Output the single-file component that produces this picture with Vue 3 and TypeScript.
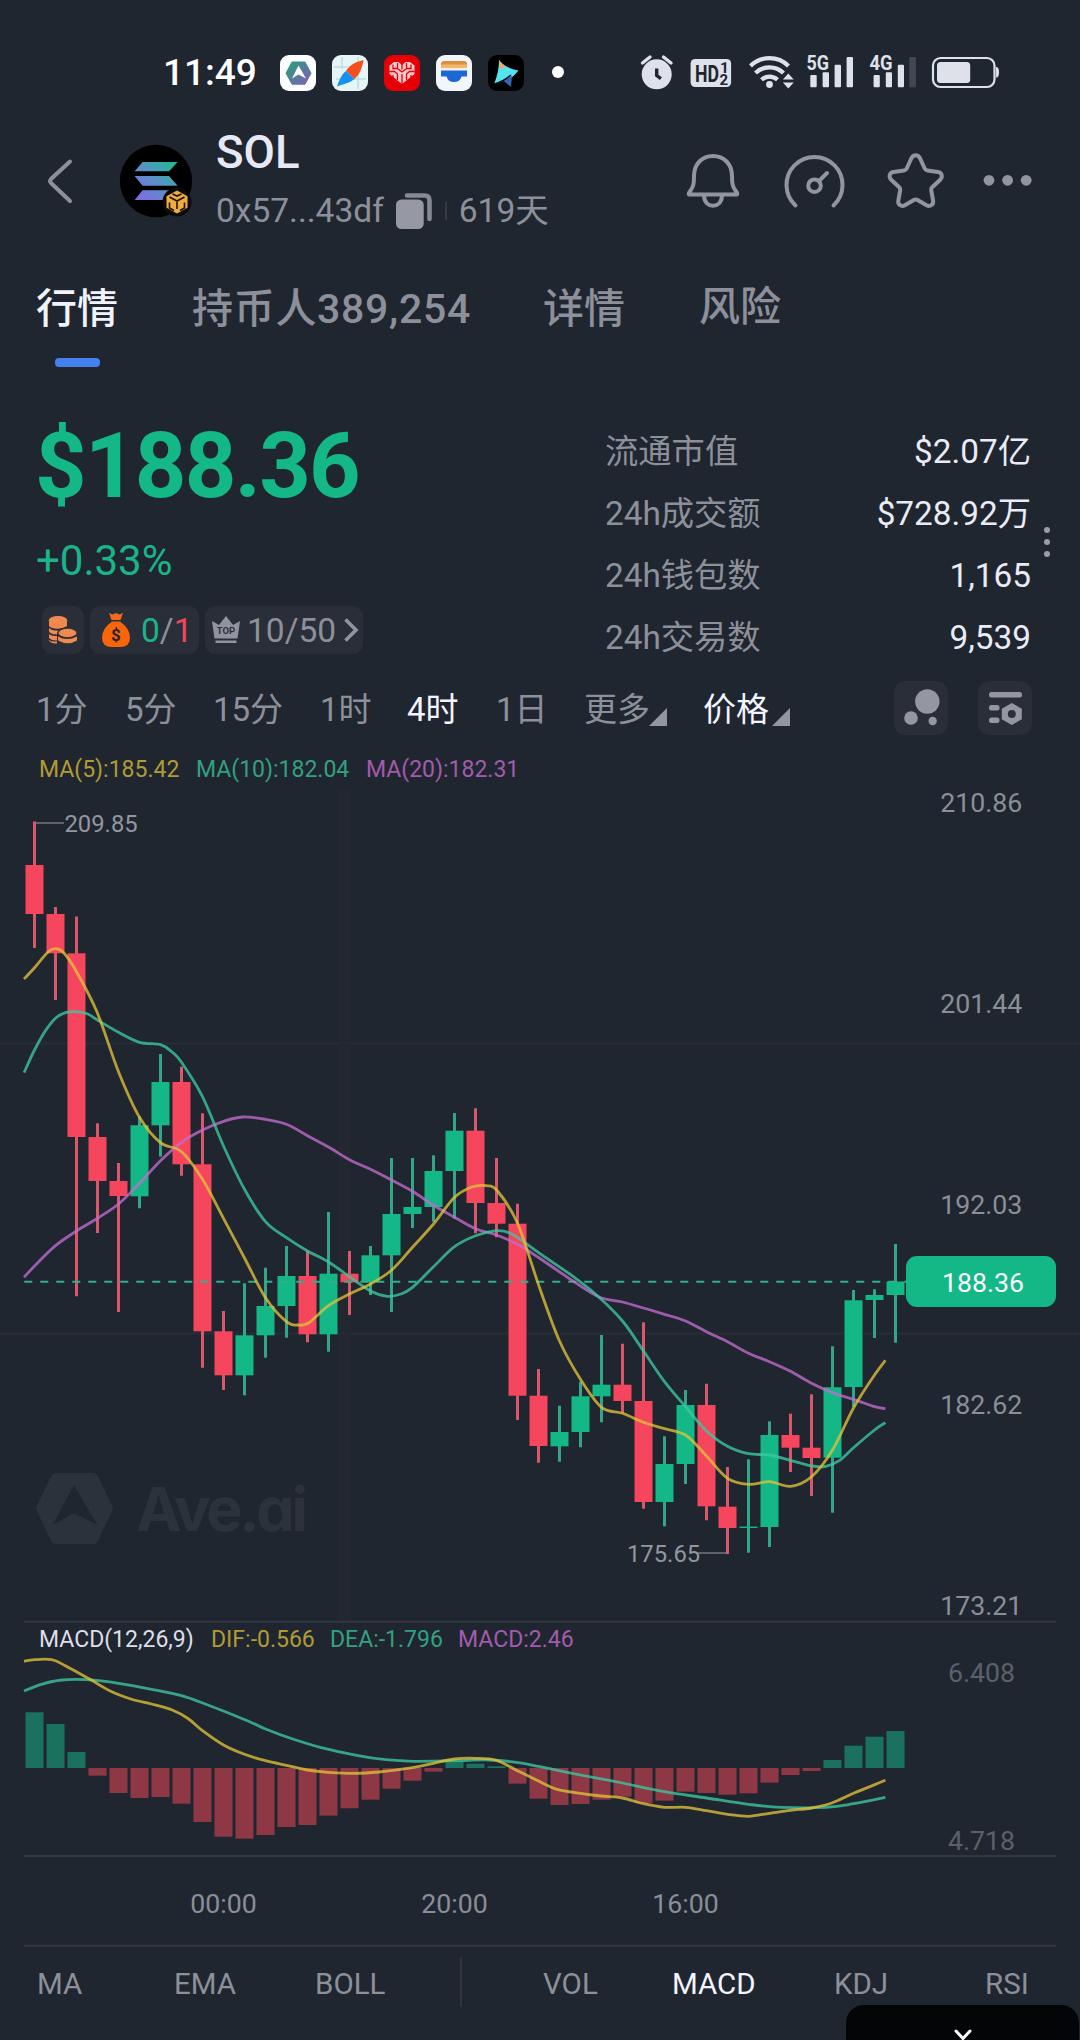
<script setup lang="ts">
type Candle = [open: 'u' | 'd', high: number, top: number, bottom: number, low: number]
type Point = [x: number, y: number]

const FIRST_X = 34.5
const STEP = 21
const BODY = 18
const ZERO_Y = 1768

const candles: Candle[] = [
  ['d', 821.5, 865, 914, 948], ['d', 907, 914, 953.3, 1000], ['d', 916.5, 953.3, 1137, 1296.3],
  ['d', 1123.3, 1137, 1181, 1233], ['d', 1163, 1181, 1196, 1312], ['u', 1116.7, 1125.3, 1196.3, 1208.3],
  ['u', 1054, 1082, 1125.3, 1156.7], ['d', 1066.7, 1082, 1164.3, 1175.7], ['d', 1113.3, 1164.3, 1331.3, 1367.7],
  ['d', 1311, 1331.3, 1375.3, 1390], ['u', 1283.3, 1335.3, 1375.3, 1395.3], ['u', 1267.7, 1306, 1335.3, 1357.7],
  ['u', 1246, 1276, 1306, 1337.7], ['d', 1250.7, 1276, 1334.3, 1342.3], ['u', 1212, 1273.7, 1334.3, 1351.7],
  ['d', 1251, 1273.7, 1282.3, 1315], ['u', 1246, 1255.3, 1282.3, 1295], ['u', 1158, 1214, 1255.3, 1312],
  ['u', 1158, 1207, 1214, 1228], ['u', 1155.3, 1171, 1207, 1221.7], ['u', 1113, 1130.7, 1171, 1218.7],
  ['d', 1108.3, 1130.7, 1203, 1233.3], ['d', 1158, 1203, 1223.7, 1237.3], ['d', 1203.7, 1223.7, 1395.7, 1420],
  ['d', 1369, 1395.7, 1446, 1462.7], ['u', 1405.7, 1432, 1446.3, 1461.7], ['u', 1381.7, 1396.3, 1432, 1447.3],
  ['u', 1335, 1384.7, 1396.3, 1422.3], ['d', 1343.7, 1384.7, 1401, 1413.3], ['d', 1322.3, 1401, 1502, 1508.7],
  ['u', 1436.3, 1464, 1502, 1526.3], ['u', 1390, 1405, 1464, 1484], ['d', 1383.7, 1405, 1506.3, 1520.3],
  ['d', 1467, 1506.7, 1528, 1554], ['u', 1459.3, 1526.6, 1528, 1552.7], ['u', 1421.3, 1435, 1527, 1547],
  ['d', 1413.7, 1435, 1447.7, 1472], ['d', 1394.3, 1447.7, 1458, 1496], ['u', 1346.3, 1387.3, 1457.7, 1512.7],
  ['u', 1290, 1300.3, 1387, 1406.7], ['u', 1289.3, 1295, 1300, 1338], ['u', 1244, 1281.5, 1295, 1342.7],
]

const histogram: number[] = [
  55.7, 44, 16, -7.7, -25, -30, -29, -35.7, -54, -68.7, -70.7, -67, -59, -57, -47.7, -40.3, -31.7, -20.7,
  -12.7, -3.7, 7, 4.3, 1.7, -15.7, -30.7, -37, -36, -31.7, -28.7, -35, -32.7, -23.7, -25, -26.7, -25.3,
  -14.7, -7, -3, 8, 22.3, 31.3, 37,
]

const ma5: Point[] = [
  [24, 979], [34.5, 967.7], [48, 952], [55.5, 948.7], [63.7, 952.7], [76.5, 971.7], [97, 1012], [118.5, 1071.7],
  [139.5, 1117.3], [160.5, 1142.7], [181.5, 1151.7], [202.5, 1179.3], [223.5, 1218.3], [244.5, 1258],
  [265.5, 1297.7], [286.5, 1321.7], [298, 1325], [308.5, 1323], [328.5, 1305.7], [349.5, 1294], [370.5, 1284],
  [391.5, 1270.3], [412.5, 1247.3], [433.5, 1224], [454.5, 1197.3], [472, 1187], [486, 1185.7], [497.5, 1191],
  [517.5, 1223.3], [540, 1289], [559.5, 1341], [580.5, 1379.3], [601.5, 1407.3], [622.5, 1413.3],
  [643.5, 1422.3], [664.5, 1428.7], [685.5, 1435], [706.5, 1456], [727.5, 1478.3], [748.5, 1484.3],
  [769.5, 1481.7], [790.5, 1486.3], [811.5, 1476.7], [832.5, 1450], [853.5, 1408], [874.5, 1375], [885.4, 1360.3],
]
const ma10: Point[] = [
  [24, 1072.7], [34.5, 1050], [44.8, 1031.7], [55.5, 1018.3], [65.4, 1012.7], [76.5, 1011.7], [87.8, 1014],
  [97.5, 1020], [118.5, 1032.3], [139.5, 1042.3], [160.5, 1044.7], [172, 1052], [181.5, 1062.3], [202.5, 1096.7],
  [223.5, 1146], [244.5, 1189.3], [265.5, 1221.7], [286.5, 1237.7], [307.5, 1251], [328.5, 1262], [349.5, 1276.7],
  [370.5, 1291], [387.4, 1296.3], [401, 1294], [412.5, 1287.3], [433.5, 1266.7], [454.5, 1246.7], [475.5, 1235.7],
  [496.5, 1230.7], [509.7, 1233], [523.5, 1241.7], [540, 1253.7], [574.4, 1277.3], [598.5, 1296.7], [622.5, 1321],
  [643.5, 1351], [664.5, 1381.7], [685.5, 1406.7], [706.5, 1431], [727.5, 1446.3], [748.5, 1453.7], [769.5, 1455],
  [790.5, 1460.3], [812, 1466], [825.8, 1466.3], [839.6, 1460.3], [853.5, 1447.7], [874.5, 1430], [885.4, 1422.7],
]
const ma20: Point[] = [
  [24, 1277.3], [34.5, 1266], [55.5, 1245.7], [76.5, 1231], [97.5, 1218.3], [118.5, 1204], [139.5, 1183.3],
  [160.5, 1160.7], [181.5, 1142.3], [202.5, 1130], [223.5, 1121.3], [242.8, 1117], [265.5, 1119.3],
  [286.5, 1124.3], [307.5, 1135.7], [328.5, 1147], [349.5, 1159.7], [370.5, 1169.3], [391.5, 1180],
  [412.5, 1191.3], [433.5, 1205.3], [454.5, 1217.3], [475.5, 1228.7], [496.5, 1235], [517.5, 1244.3],
  [540, 1258.5], [567.5, 1277.3], [598.5, 1296.7], [622.5, 1302], [643.5, 1308], [664.5, 1314.3], [685.5, 1321],
  [706.5, 1331.7], [727.5, 1341.7], [748.5, 1353.3], [769.5, 1361.7], [790.5, 1371.3], [811.5, 1383.3],
  [832.5, 1392.7], [853.5, 1399.3], [874.5, 1406.7], [885.4, 1408.7],
]
const dif: Point[] = [
  [24, 1661.3], [34.5, 1659.7], [51.7, 1659.7], [65.4, 1665.7], [90, 1679.3], [110.2, 1691], [130.9, 1699],
  [151.5, 1704], [172.2, 1710], [188, 1718.5], [202.5, 1730.7], [223.5, 1745], [244.5, 1754.3], [265.5, 1760.7],
  [286.5, 1765.3], [307.5, 1770], [328.5, 1772.3], [354.7, 1773.3], [378.8, 1772], [412.5, 1767.7],
  [433.5, 1763.3], [454.5, 1759], [475.5, 1758.3], [496.5, 1760.3], [517.5, 1770.7], [540, 1781.7],
  [557, 1789.3], [580.5, 1793.3], [601.3, 1796], [622.5, 1798], [643.5, 1803.7], [664.5, 1807.3],
  [685.5, 1807.3], [706.5, 1810.7], [727.5, 1814.3], [748.5, 1816.3], [769.5, 1813.3], [790.5, 1810.3],
  [811.5, 1808], [832.5, 1802.7], [853.5, 1793.3], [885.4, 1780.3],
]
const dea: Point[] = [
  [24, 1691], [41.3, 1684.3], [62, 1680], [86, 1679.7], [118.5, 1683.3], [151.5, 1689.3], [181.5, 1695.7],
  [206.6, 1704.5], [248, 1721], [265.5, 1729], [292.7, 1739], [320.3, 1747.3], [358, 1755.7], [385.7, 1759.7],
  [413, 1761.3], [454.5, 1760.7], [489, 1760], [516.6, 1762.3], [540, 1766.7], [580.5, 1775], [622.5, 1783],
  [664.5, 1791.7], [706.5, 1798], [748.5, 1804.3], [781, 1807.3], [826, 1807.3], [853.5, 1803.7], [885.4, 1797.3],
]

function smooth(pts: Point[]): string {
  let d = `M${pts[0][0]} ${pts[0][1]}`
  for (let i = 0; i < pts.length - 1; i++) {
    const p0 = pts[Math.max(i - 1, 0)]
    const p1 = pts[i]
    const p2 = pts[i + 1]
    const p3 = pts[Math.min(i + 2, pts.length - 1)]
    const c1 = [p1[0] + (p2[0] - p0[0]) / 6, p1[1] + (p2[1] - p0[1]) / 6]
    const c2 = [p2[0] - (p3[0] - p1[0]) / 6, p2[1] - (p3[1] - p1[1]) / 6]
    d += `C${c1[0].toFixed(1)} ${c1[1].toFixed(1)} ${c2[0].toFixed(1)} ${c2[1].toFixed(1)} ${p2[0]} ${p2[1]}`
  }
  return d
}

const cx = (i: number): number => FIRST_X + i * STEP

const priceAxis = [
  { y: 812, label: '210.86' },
  { y: 1012.8, label: '201.44' },
  { y: 1213.6, label: '192.03' },
  { y: 1414.4, label: '182.62' },
  { y: 1615.2, label: '173.21' },
]
const timeAxis = [
  { x: 223.5, label: '00:00' },
  { x: 454.5, label: '20:00' },
  { x: 685.5, label: '16:00' },
]
const stats = [
  { label: '流通市值', value: '$2.07亿' },
  { label: '24h成交额', value: '$728.92万' },
  { label: '24h钱包数', value: '1,165' },
  { label: '24h交易数', value: '9,539' },
]
const frames = ['1分', '5分', '15分', '1时', '4时', '1日']
const indicators = ['MA', 'EMA', 'BOLL', '', 'VOL', 'MACD', 'KDJ', 'RSI']
</script>

<template>
  <div class="screen">
    <div class="status">
      <span class="clock">11:49</span>
      <div class="apps">
        <svg width="36" height="36" viewBox="0 0 36 36">
          <defs>
            <linearGradient id="hexG" x1="0" y1="0" x2="1" y2="1">
              <stop offset="0.2" stop-color="#359583" /><stop offset="0.85" stop-color="#7667b4" />
            </linearGradient>
          </defs>
          <rect width="36" height="36" rx="9" fill="#fdfeff" />
          <path d="M12 7h13l6 11.200-6 11H12L6 18.200z" fill="url(#hexG)" stroke="url(#hexG)" stroke-width="1" stroke-linejoin="round" />
          <path d="M18.500 10.500l7.500 13-7.500-4-6.500 4z" fill="#fff" />
        </svg>
        <svg width="36" height="36" viewBox="0 0 36 36">
          <rect width="36" height="36" rx="9" fill="#e6f5f5" />
          <path d="M4 24h30M26 2v32M10 2v12M2 12h14" stroke="#b9dfe3" stroke-width="1.500" />
          <path d="M31.500 5C22 7 16 12 14 16l8.500 8C28 19 30 13 31.500 5z" fill="#f4501e" />
          <path d="M14 16l8.500 8C18 28 12 29 5 31.500 7 26 9 20 14 16z" fill="#1491f2" />
        </svg>
        <svg width="36" height="36" viewBox="0 0 36 36">
          <rect width="36" height="36" rx="9" fill="#e60005" />
          <path d="M18 29L5.500 19v-8.500l4.500-3.500h4.500L18 10l3.500-3H26l4.500 3.500V19z" fill="#ffc9cb" />
          <path d="M18 9v5.500m0 4.500v10M9 9.500v4h4.500V8m13.500 1.500v4h-4.500V8M5.500 16.500h5l3 2.500v6m17-8.500h-5l-3 2.500v6M14 14l4 3 4-3M9 20v3m18-3v3" stroke="#e60005" stroke-width="1.300" fill="none" />
        </svg>
        <svg width="36" height="36" viewBox="0 0 36 36">
          <rect width="36" height="36" rx="9" fill="#f3f5fc" />
          <path d="M5 9q0-3 3-3h20q3 0 3 3v1H5z" fill="#dd913e" />
          <path d="M5 9.500h26v3.500H5z" fill="#f2b76d" />
          <path d="M5 13h26v2.500H5z" fill="#f7f1df" />
          <path d="M5 15.500h26v6h-5.500q-1.500 5.500-7.500 5.500t-7.500-5.500H5z" fill="#1d68d4" />
        </svg>
        <svg width="36" height="36" viewBox="0 0 36 36">
          <rect width="36" height="36" rx="9" fill="#000" />
          <path d="M11 5q6 8 19.500 10.500Q26 21 22 24L6 29q5-12 5-24z" fill="#54e3ef" />
          <path d="M11 5q3.500 5 7 7l-6 2z" fill="#f5a564" />
          <path d="M15 25.500l9-4.500-1 11z" fill="#3663b4" />
          <path d="M6 29q9-2 17-9" stroke="#061018" stroke-width="1.500" fill="none" />
        </svg>
      </div>
      <i class="notif"></i>
      <svg class="sys" width="362" height="40" viewBox="640 52 362 40">
        <g fill="#dfe1ea">
          <circle cx="656.700" cy="74.300" r="15" />
          <path d="M642.500 63l7.500-6M671 63l-7.500-6" stroke="#dfe1ea" stroke-width="3.400" stroke-linecap="round" />
          <path d="M656.700 68.500v7l4.200 3.200" fill="none" stroke="#20262f" stroke-width="3.400" />
          <rect x="690.600" y="59" width="40.500" height="28" rx="4.500" />
          <text x="695" y="81.500" font-size="24" font-weight="700" textLength="24" lengthAdjust="spacingAndGlyphs" fill="#20262f">HD</text>
          <text x="720" y="72.500" font-size="15.500" font-weight="700" fill="#20262f">1</text>
          <text x="719.500" y="84.500" font-size="15" font-weight="700" fill="#20262f">2</text>
          <g fill="none" stroke="#dfe1ea" stroke-width="4.200">
            <path d="M750.500 66a27 27 0 0 1 38 0" />
            <path d="M755.500 73a20 20 0 0 1 28 0" />
            <path d="M761.500 79.700a12 12 0 0 1 16 0" />
          </g>
          <circle cx="769.500" cy="84.500" r="3.400" />
          <path d="M788.300 73.500l5.400 6h-10.800zM788.300 88.500l5.400-6h-10.800z" />
          <text x="806.500" y="70" font-size="20" font-weight="700" textLength="22.500" lengthAdjust="spacingAndGlyphs">5G</text>
          <rect x="810.300" y="75" width="6.400" height="12.300" rx="1" /><rect x="822.600" y="72.300" width="6.400" height="15" rx="1" />
          <rect x="834.600" y="64.700" width="6.400" height="22.600" rx="1" /><rect x="846.600" y="57" width="6.400" height="30.300" rx="1" />
          <text x="869.500" y="70" font-size="20" font-weight="700" textLength="23" lengthAdjust="spacingAndGlyphs">4G</text>
          <rect x="873.600" y="75" width="6.200" height="12.300" rx="1" /><rect x="885.800" y="72.300" width="6.200" height="15" rx="1" />
          <rect x="897.800" y="64.700" width="6.200" height="22.600" rx="1" /><rect x="909.300" y="57" width="6.600" height="30.300" rx="1" fill="#434753" />
          <rect x="933" y="58" width="61.500" height="29" rx="7.500" fill="none" stroke="#dfe1ea" stroke-width="2.200" />
          <rect x="937" y="62" width="33.200" height="21" rx="3.500" />
          <path d="M996 67h1q2 1 2 5.300t-2 5.300h-1z" />
        </g>
      </svg>
    </div>

    <header class="head">
      <svg class="back" width="28" height="48" viewBox="46 157 28 48">
        <path d="M70 161.500L51 179q-1.800 2 0 4l19 18" fill="none" stroke="#8d909b" stroke-width="4" stroke-linecap="round" />
      </svg>
      <svg class="logo" width="74" height="74" viewBox="119 144 74 74">
        <defs>
          <linearGradient id="solG" gradientUnits="userSpaceOnUse" x1="138" y1="202" x2="174" y2="160">
            <stop offset="0" stop-color="#8567e6" /><stop offset="0.500" stop-color="#5a90c8" /><stop offset="1" stop-color="#1bc08b" />
          </linearGradient>
        </defs>
        <circle cx="156" cy="181" r="36.200" fill="#000" />
        <path d="M142.600 162h35l-8.500 9.300h-34.500zM134.600 176h34.500l8.500 9.700h-35zM142.600 190.300h35l-8.500 9.700h-34.500z" fill="url(#solG)" />
        <circle cx="177" cy="202" r="14.500" fill="#0b0a0d" />
        <path d="M177 190.500l10.500 5.700v11.600L177 213.500l-10.500-5.700v-11.600z" fill="#f0ad3e" />
        <path d="M169.500 197l7.500 4 7.500-4M177 201v8M169.500 202.500v5.500l4.500 2.500M184.500 202.500v5.500l-4.500 2.500M172.500 194l4.500 2 4.500-2" fill="none" stroke="#1b1205" stroke-width="1.600" />
      </svg>
      <div class="title">
        <div class="name">SOL</div>
        <div class="addr">
          <span>0x57...43df</span>
          <svg class="copy" width="37" height="38" viewBox="395 192 37 38">
            <path d="M407 195.500h17.500q5 0 5 5V219" fill="none" stroke="#858993" stroke-width="4.600" stroke-linecap="round" />
            <rect x="396" y="199.500" width="27.700" height="29.500" rx="5.500" fill="#9699a3" />
          </svg>
          <i class="bar"></i>
          <span>619天</span>
        </div>
      </div>
      <svg class="tools" width="350" height="62" viewBox="684 150 350 62" fill="none" stroke="#9295a0" stroke-width="4" stroke-linecap="round" stroke-linejoin="round">
        <path d="M689 194.500c-1-1.500.5-2.500 1.600-4 3-4.500 3.400-7 3.400-14.500 0-12 8-20 19-20s19 8 19 20c0 7.500.4 10 3.400 14.500 1.100 1.500 2.600 2.500 1.600 4z" />
        <path d="M704 196c.5 6.500 4.500 9.800 9 9.800s8.500-3.300 9-9.800" />
        <path d="M795.500 205.500a28 28 0 1 1 38 0" />
        <circle cx="814.500" cy="185.700" r="6.300" />
        <path d="M819.500 180.500l7.500-7.500" />
        <path d="M911.500 158c1.800-3.600 6.600-3.600 8.400 0l4.800 10.500q.8 1.700 2.700 2l10.600 1.500c4 .6 5 5 2.200 7.700l-8 7.500q-1.300 1.300-1 3l1.900 10.500c.6 4-3 6.400-6.600 4.600l-8.900-5.200q-1.900-1-3.800 0l-8.900 5.200c-3.600 1.800-7.200-.6-6.600-4.600l1.900-10.500q.3-1.700-1-3l-8-7.500c-2.800-2.700-1.800-7.100 2.200-7.700l10.600-1.500q1.900-.3 2.700-2z" />
        <g fill="#9295a0" stroke="none">
          <circle cx="989" cy="180.300" r="5.400" /><circle cx="1007.600" cy="180.300" r="5.400" /><circle cx="1026.200" cy="180.300" r="5.400" />
        </g>
      </svg>
    </header>

    <nav class="tabs">
      <div class="tab on">行情<i></i></div>
      <div class="tab wide">持币人389,254</div>
      <div class="tab">详情</div>
      <div class="tab up">风险</div>
    </nav>

    <section class="summary">
      <div class="quote">
        <div class="price">$188.36</div>
        <div class="chg">+0.33%</div>
        <div class="chips">
          <div class="chip c1">
            <svg width="30" height="30" viewBox="0 0 30 30">
              <g fill="#f0884f">
                <path d="M1 7v4q4 4 14 2l4-2V7zM1 13v4q3 2.500 8 2.500l2-4Q4 16 1 13zM1 19v4q3 3 8 2.500V21Q3 21 1 19zM1 25v1q3 3 8 2.500v-2Q3 27 1 25z" />
                <ellipse cx="10" cy="5.500" rx="9.300" ry="4.500" />
                <ellipse cx="19.500" cy="18" rx="9.700" ry="5" stroke="#2b2f39" stroke-width="1.500" />
                <path d="M10 21.500q9 5 19 0v4q-9 5.500-19 0z" />
              </g>
            </svg>
          </div>
          <div class="chip c2">
            <svg width="30" height="36" viewBox="0 0 30 36">
              <path d="M8 1l3.500 1.500L15 1l3.500 1.500L22 1l-2.500 7h-9z" fill="#f26a1b" />
              <path d="M11 9.500h8q10 7 10 16 0 9.500-10 9.500h-8Q1 35 1 25.500q0-9 10-16z" fill="#f9650a" />
              <text x="15" y="29" text-anchor="middle" font-size="17" font-weight="700" fill="#2b2320">$</text>
            </svg>
            <span><b class="g">0</b>/<b class="r">1</b></span>
          </div>
          <div class="chip c3">
            <svg width="28" height="28" viewBox="0 0 28 28">
              <path d="M0 5l7 4L14 0l7 9 7-4-2.500 17.500h-23zM3.500 24.500h21V27h-21z" fill="#9194a0" />
              <text x="14" y="18" text-anchor="middle" font-size="9.500" font-weight="700" fill="#2b2f39">TOP</text>
            </svg>
            <span>10/50</span>
            <svg width="16" height="26" viewBox="0 0 16 26"><path d="M2.500 2.500L13 13 2.500 23.500" fill="none" stroke="#9194a0" stroke-width="3.600" /></svg>
          </div>
        </div>
      </div>
      <dl class="stats">
        <div v-for="s in stats" :key="s.label" class="stat"><dt>{{ s.label }}</dt><dd>{{ s.value }}</dd></div>
      </dl>
      <div class="vdots"><i></i><i></i><i></i></div>
    </section>

    <div class="frames">
      <span v-for="f in frames" :key="f" :class="{ on: f === '4时' }">{{ f }}</span>
      <span class="drop">更多<i></i></span>
      <span class="drop on">价格<i class="far"></i></span>
      <button class="sq">
        <svg width="54" height="54" viewBox="0 0 54 54" fill="#9497a2">
          <circle cx="33.300" cy="20.500" r="12.200" /><circle cx="17" cy="37" r="6.800" /><circle cx="38.700" cy="40" r="4.200" />
        </svg>
      </button>
      <button class="sq">
        <svg width="54" height="54" viewBox="0 0 54 54" fill="#9497a2">
          <rect x="11" y="11" width="33" height="5.500" rx="2.500" />
          <rect x="11" y="24" width="10.500" height="5.500" rx="2.500" /><rect x="11" y="36.500" width="10.500" height="5.500" rx="2.500" />
          <path d="M33.800 22l10 5.700v10.600l-10 5.700-10-5.700V27.700z" /><circle cx="33.800" cy="33" r="4" fill="#2b2f39" />
        </svg>
      </button>
    </div>

    <svg class="chart" width="1080" height="1200" viewBox="0 750 1080 1200">
      <path d="M0 1043.500H1080M0 1333.500H1080" stroke="#282c36" stroke-width="2" />
      <path d="M344.500 790V1621" stroke="#24283180" stroke-width="12" />
      <g fill="#2c323c">
        <path fill-rule="evenodd" d="M56 1473h37q3 0 4.500 2.500l14.500 30q1.500 3 0 6l-14.500 30q-1.500 2.500-4.500 2.500H56q-3 0-4.500-2.500l-14.500-30q-1.500-3 0-6l14.500-30Q53 1473 56 1473zM74 1485l-21.500 40 21.500-12 23.500 12z" />
        <text class="mark" x="136" y="1531" textLength="172">Ave.ai</text>
      </g>
      <path d="M24 1621.800H1056M24 1856H1056M24 1945.800H1056" stroke="#333742" stroke-width="2" />

      <g class="legend">
        <text x="39" y="777" fill="#b09c35">MA(5):185.42</text>
        <text x="196" y="777" fill="#33a181">MA(10):182.04</text>
        <text x="366" y="777" fill="#a35bae">MA(20):182.31</text>
        <text x="39" y="1647" fill="#dcdfe9">MACD(12,26,9)</text>
        <text x="211" y="1647" fill="#b09c35">DIF:-0.566</text>
        <text x="330" y="1647" fill="#33a181">DEA:-1.796</text>
        <text x="458" y="1647" fill="#a35bae">MACD:2.46</text>
      </g>

      <g v-for="(c, i) in candles" :key="i" :class="c[0]">
        <rect class="wick" :x="cx(i) - 1.5" :y="c[1]" width="3" :height="c[4] - c[1]" />
        <rect :x="cx(i) - BODY / 2" :y="c[2]" :width="BODY" :height="c[3] - c[2]" />
      </g>

      <path d="M24.300 1281.700H906" stroke="#2fb08c" stroke-width="2" stroke-dasharray="8 8" />

      <g v-for="(h, i) in histogram" :key="'h' + i">
        <rect :x="cx(i) - BODY / 2" :y="h > 0 ? ZERO_Y - h : ZERO_Y" :width="BODY" :height="Math.abs(h)" :fill="h > 0 ? '#1a725e' : '#8e3745'" />
      </g>

      <g class="lines">
        <path :d="smooth(ma20)" stroke="#c36bd0" />
        <path :d="smooth(ma10)" stroke="#3cc8a0" />
        <path :d="smooth(ma5)" stroke="#e0c13a" />
        <path :d="smooth(dea)" stroke="#3cc8a0" />
        <path :d="smooth(dif)" stroke="#e0c13a" />
      </g>

      <path d="M36 823H64M698 1553H726" stroke="#70747f" stroke-width="1.500" />
      <text class="peak" x="64.500" y="832">209.85</text>
      <text class="peak" x="627" y="1562">175.65</text>

      <text v-for="p in priceAxis" :key="p.label" class="axis" x="940.300" :y="p.y">{{ p.label }}</text>
      <rect x="906" y="1256" width="150" height="51" rx="11" fill="#14b886" />
      <text class="axis now" x="942" y="1291.700">188.36</text>
      <text class="axis dim" x="948" y="1681.500">6.408</text>
      <text class="axis dim" x="948" y="1849.500">4.718</text>
      <text v-for="t in timeAxis" :key="t.label" class="axis" text-anchor="middle" :x="t.x" y="1912.500">{{ t.label }}</text>
    </svg>

    <footer class="inds">
      <span v-for="n in indicators" :key="n" :class="{ on: n === 'MACD', sep: !n }">{{ n }}</span>
      <div class="sheet">
        <svg width="18" height="12" viewBox="0 0 18 12"><path d="M2 2l7 7.500L16 2" fill="none" stroke="#fff" stroke-width="3" stroke-linecap="round" /></svg>
      </div>
    </footer>
  </div>
</template>

<style>
body { background: #20262f; }
</style>

<style scoped>
.screen { width: 1080px; height: 2040px; overflow: hidden; background: #20262f; color: #8d909b; font-family: Roboto, "Noto Sans CJK SC", sans-serif; display: flex; flex-direction: column; }
svg { display: block; flex: none; }
i { display: block; }
b { font-weight: 400; }

.status { height: 110px; display: flex; align-items: flex-start; padding: 55px 0 0 163px; box-sizing: border-box; }
.clock { width: 117px; font-size: 37px; line-height: 36px; font-weight: 500; color: #fff; white-space: nowrap; }
.apps { display: flex; gap: 16px; }
.notif { width: 12px; height: 12px; border-radius: 50%; background: #fff; margin: 11px 0 0 28px; }
.sys { margin: -3px 0 0 76px; }

.head { height: 140px; display: flex; align-items: flex-start; }
.back { margin: 47px 0 0 46px; }
.logo { margin: 34px 0 0 45px; }
.title { width: 461px; margin: 14px 0 0 23px; }
.name { font-size: 45.500px; line-height: 58px; font-weight: 500; color: #e6e9f5; }
.addr { display: flex; align-items: center; height: 58px; font-size: 33.500px; line-height: 58px; white-space: nowrap; }
.copy { margin-left: 11px; }
.bar { width: 2px; height: 18px; background: #373b46; margin: 0 12px 0 13px; }
.tools { margin: 40px 0 0 7px; }

.tabs { height: 140px; display: grid; grid-template-columns: 156px 351px 156px 1fr; padding-left: 36px; font-size: 41px; line-height: 118px; font-weight: 500; }
.tab.on { color: #f0f3fc; }
.tab.on i { width: 45px; height: 9px; border-radius: 4px; background: #4480ee; margin: -10px 0 0 19px; }
.tab.wide { letter-spacing: 0.7px; }
.tab.up { line-height: 115px; }

.summary { height: 280px; display: flex; }
.quote { width: 570px; padding-left: 35px; }
.price { height: 132px; font-size: 90px; line-height: 153px; font-weight: 700; letter-spacing: -1.700px; color: #14b886; }
.chg { height: 84px; font-size: 42px; line-height: 77px; padding-left: 1px; color: #1bb38a; }
.chips { display: flex; padding-left: 7px; }
.chip { height: 48px; box-sizing: border-box; border-radius: 11px; background: #2a2e38; display: flex; align-items: center; font-size: 33.500px; white-space: nowrap; }
.c1 { width: 42px; padding-left: 6px; margin-right: 6px; }
.c2 { width: 109px; padding-left: 11px; margin-right: 6px; gap: 10px; }
.c3 { width: 158px; padding-left: 7px; gap: 7px; }
.g { color: #1bb38a; }
.r { color: #f1475d; }
.stats { width: 426px; margin: 30px 0 0; }
.stat { height: 62px; display: flex; justify-content: space-between; font-size: 33.300px; line-height: 63px; }
dd { margin: 0; color: #e9ecf7; }
.vdots { margin: 137px 0 0 13px; display: flex; flex-direction: column; gap: 6px; }
.vdots i { width: 6px; height: 6px; border-radius: 50%; background: #9a9da8; }

.frames { height: 80px; display: grid; grid-template-columns: 89px 88px 107px 87px 89px 88px 119px 188px 84px 1fr; padding-left: 36px; font-size: 33px; line-height: 80px; }
.frames .on { color: #f2f5ff; }
.drop { display: flex; }
.drop i { width: 18px; height: 18px; background: #9396a1; clip-path: polygon(100% 0, 100% 100%, 0 100%); margin: 38px 0 0 -1px; }
.drop .far { margin-left: 3px; }
.sq { width: 54px; height: 54px; padding: 0; border: 0; border-radius: 12px; background: #2a2e38; margin: 11px 0 0 3px; }

.legend { font-size: 23px; }
.mark { font-family: Inter, sans-serif; font-weight: 700; font-size: 61px; font-feature-settings: "cv11"; }
.u { fill: #14b886; }
.d { fill: #f6465d; }
.u .wick { fill: #32a687; }
.d .wick { fill: #d9586b; }
.lines path { fill: none; stroke-width: 2.800; opacity: 0.78; }
.peak { font-size: 23.800px; fill: #9396a1; }
.axis { font-size: 26.700px; fill: #8b8e99; }
.now { fill: #fff; }
.dim { fill: #5c606b; }

.inds { position: relative; height: 90px; display: grid; grid-template-columns: 137px 141px 145px 83px 129px 162px 151px 1fr; padding-left: 37px; font-size: 29.500px; line-height: 69px; }
.inds .on { color: #f2f5ff; }
.inds .sep { width: 2px; height: 50px; background: #30343f; margin-top: 7px; }
.sheet { position: absolute; left: 846px; top: 55px; width: 233px; height: 60px; border-radius: 18px; background: #040506; display: flex; justify-content: center; padding-top: 24px; box-sizing: border-box; }
</style>
